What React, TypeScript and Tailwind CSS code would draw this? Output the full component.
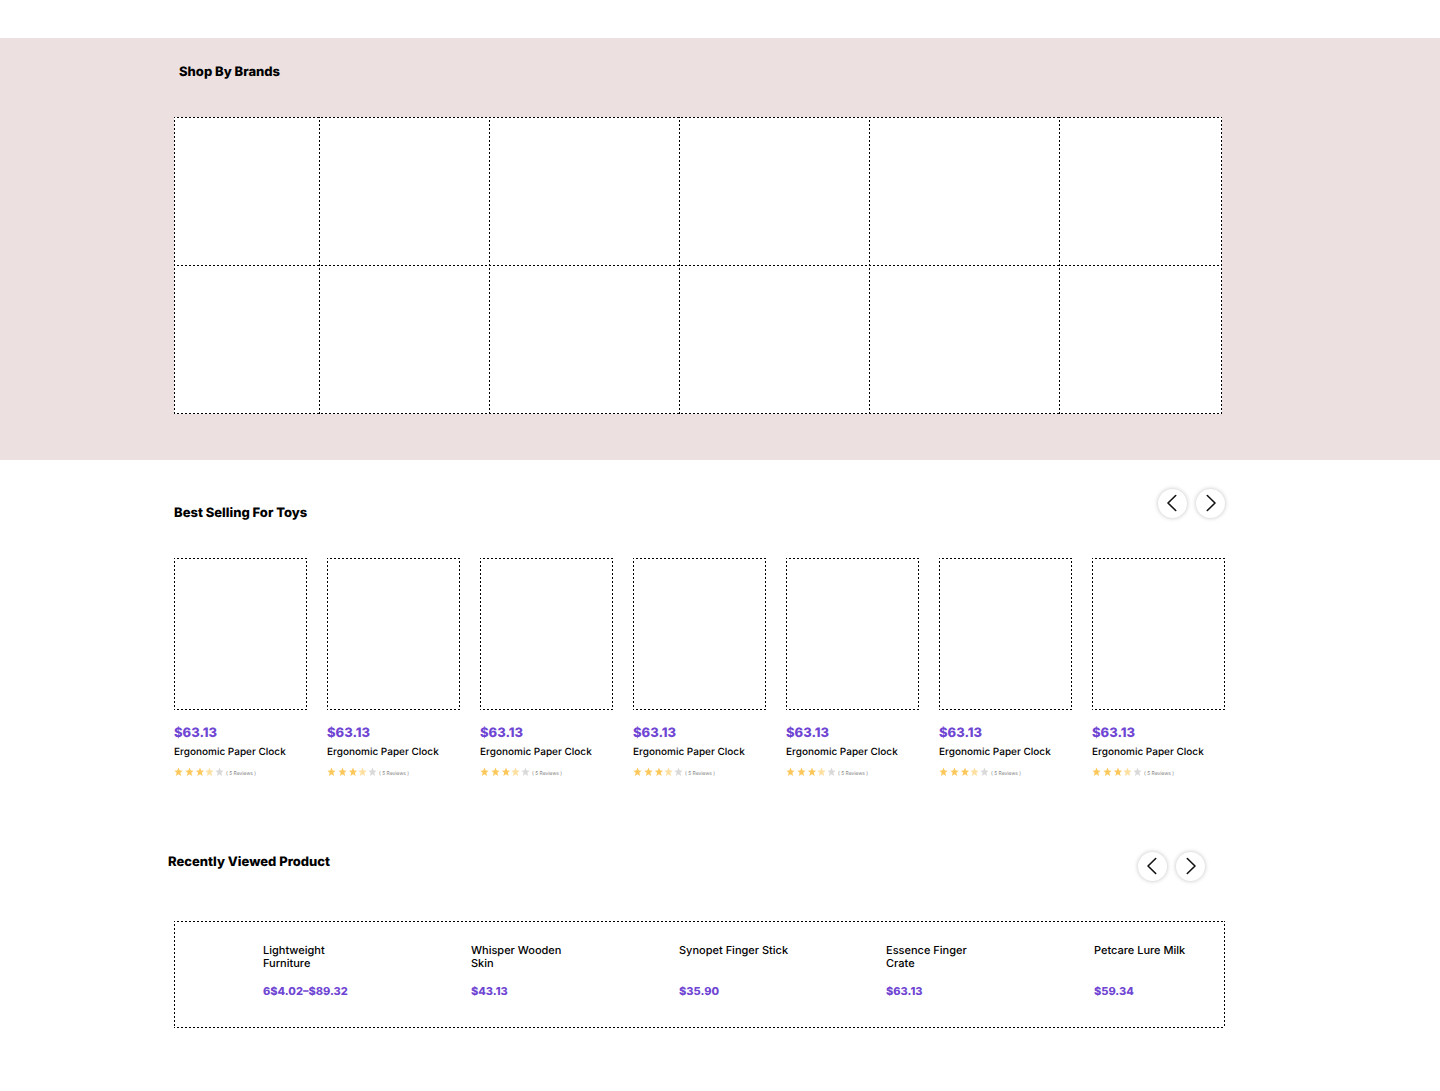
import React from "react";

const frame =
  "[background:linear-gradient(90deg,#000_50%,transparent_50%)_-1px_0/4px_1px_repeat-x,linear-gradient(90deg,#000_50%,transparent_50%)_-1px_100%/4px_1px_repeat-x,linear-gradient(#000_50%,transparent_50%)_0_-1px/1px_4px_repeat-y,linear-gradient(#000_50%,transparent_50%)_100%_-1px/1px_4px_repeat-y,#fff]";

const topLine = "[background:linear-gradient(90deg,#000_50%,transparent_50%)_-1px_0/4px_1px_repeat-x]";

const leftLine = "[background:linear-gradient(#000_50%,transparent_50%)_0_-1px/1px_4px_repeat-y]";

const toys = Array.from({ length: 7 }, () => ({ price: "$63.13", name: "Ergonomic Paper Clock" }));

const recent = [
  { name: "Lightweight Furniture", price: "6$4.02–$89.32" },
  { name: "Whisper Wooden Skin", price: "$43.13" },
  { name: "Synopet Finger Stick", price: "$35.90" },
  { name: "Essence Finger Crate", price: "$63.13" },
  { name: "Petcare Lure Milk", price: "$59.34" },
];

function Arrow({ label, d }: { label: string; d: string }) {
  return (
    <button
      type="button"
      aria-label={label}
      className="flex size-[29px] items-center justify-center rounded-full bg-white shadow-[0_0_4px_rgba(0,0,0,0.25)]"
    >
      <svg viewBox="0 0 29 29" className="size-full" fill="none" stroke="#111" strokeWidth="1.6" strokeLinecap="round" strokeLinejoin="round">
        <path d={d} />
      </svg>
    </button>
  );
}

function Arrows() {
  return (
    <div className="flex gap-[9px]">
      <Arrow label="Previous" d="M17.700 6.500L10 14L17.700 21.500" />
      <Arrow label="Next" d="M11.300 6.500L19 14L11.300 21.500" />
    </div>
  );
}

function Stars() {
  const star = "M0-4.600L1.200-1.400L4.100-1.300L1.800.8L2.700 4L0 2.200L-2.700 4L-1.800.8L-4.100-1.300L-1.200-1.400Z";
  return (
    <svg viewBox="0 0 50 10" className="h-[10px] w-[50px]" role="img" aria-label="3.5 out of 5 stars">
      <path d={star} transform="translate(4.500 5)" fill="#fcc85c" />
      <path d={star} transform="translate(15.500 5)" fill="#fcc85c" />
      <path d={star} transform="translate(26 5)" fill="#fcc85c" />
      <path d={star} transform="translate(35.500 5)" fill="#fddf9f" />
      <path d={star} transform="translate(45.500 5)" fill="#d9d9d9" />
    </svg>
  );
}

function BrandRow({ className }: { className: string }) {
  return (
    <div className={`grid grid-cols-[145fr_170fr_190fr_190fr_190fr_163fr] ${className}`}>
      <div />
      {Array.from({ length: 5 }, (_, i) => (
        <div key={i} className={leftLine} />
      ))}
    </div>
  );
}

export default function App() {
  return (
    <main className="bg-white pt-[38px] pb-16 font-['Inter',sans-serif] text-black [text-rendering:geometricPrecision]">
      <section className="bg-[#ece0e0] pt-6 pr-[218px] pb-[46px] pl-[174px]">
        <h2 className="pl-[5px] text-[13px] leading-5 font-extrabold">Shop By Brands</h2>
        <div className={`mt-[35px] ${frame}`}>
          <BrandRow className="h-[148px]" />
          <BrandRow className={`h-[149px] ${topLine}`} />
        </div>
      </section>

      <section className="pt-[29px] pr-[215px] pl-[174px]">
        <div className="flex items-start justify-between">
          <h2 className="pt-[14px] text-[13px] leading-5 font-extrabold">Best Selling For Toys</h2>
          <Arrows />
        </div>
        <ul className="mt-[35px] grid grid-cols-7 gap-5">
          {toys.map((toy, i) => (
            <li key={i} className="min-w-0">
              <div className={`h-[152px] ${frame}`} />
              <p className="mt-[15px] text-[13px] leading-4 font-extrabold text-[#6f45d3]">{toy.price}</p>
              <h3 className="mt-[3px] text-[10px] leading-4 font-medium whitespace-nowrap">{toy.name}</h3>
              <div className="mt-[7px] flex items-start gap-[2px]">
                <Stars />
                <span className="pt-[2px] text-[5px] leading-[10px] font-light text-[#555]">( 5 Reviews )</span>
              </div>
            </li>
          ))}
        </ul>
      </section>

      <section className="pt-[73px] pr-[215px] pl-[168px]">
        <div className="flex items-start justify-between pr-5">
          <h2 className="text-[13px] leading-5 font-extrabold">Recently Viewed Product</h2>
          <Arrows />
        </div>
        <ul className={`mt-10 ml-[6px] grid h-[107px] grid-cols-[208fr_208fr_207fr_208fr_131fr] pt-[23px] pl-[89px] ${frame}`}>
          {recent.map((item) => (
            <li key={item.name}>
              <h3 className="h-[26px] w-[110px] text-[11px] leading-[13px] font-medium">{item.name}</h3>
              <p className="mt-[13px] text-[11px] leading-4 font-extrabold whitespace-nowrap text-[#6f45d3]">{item.price}</p>
            </li>
          ))}
        </ul>
      </section>
    </main>
  );
}
